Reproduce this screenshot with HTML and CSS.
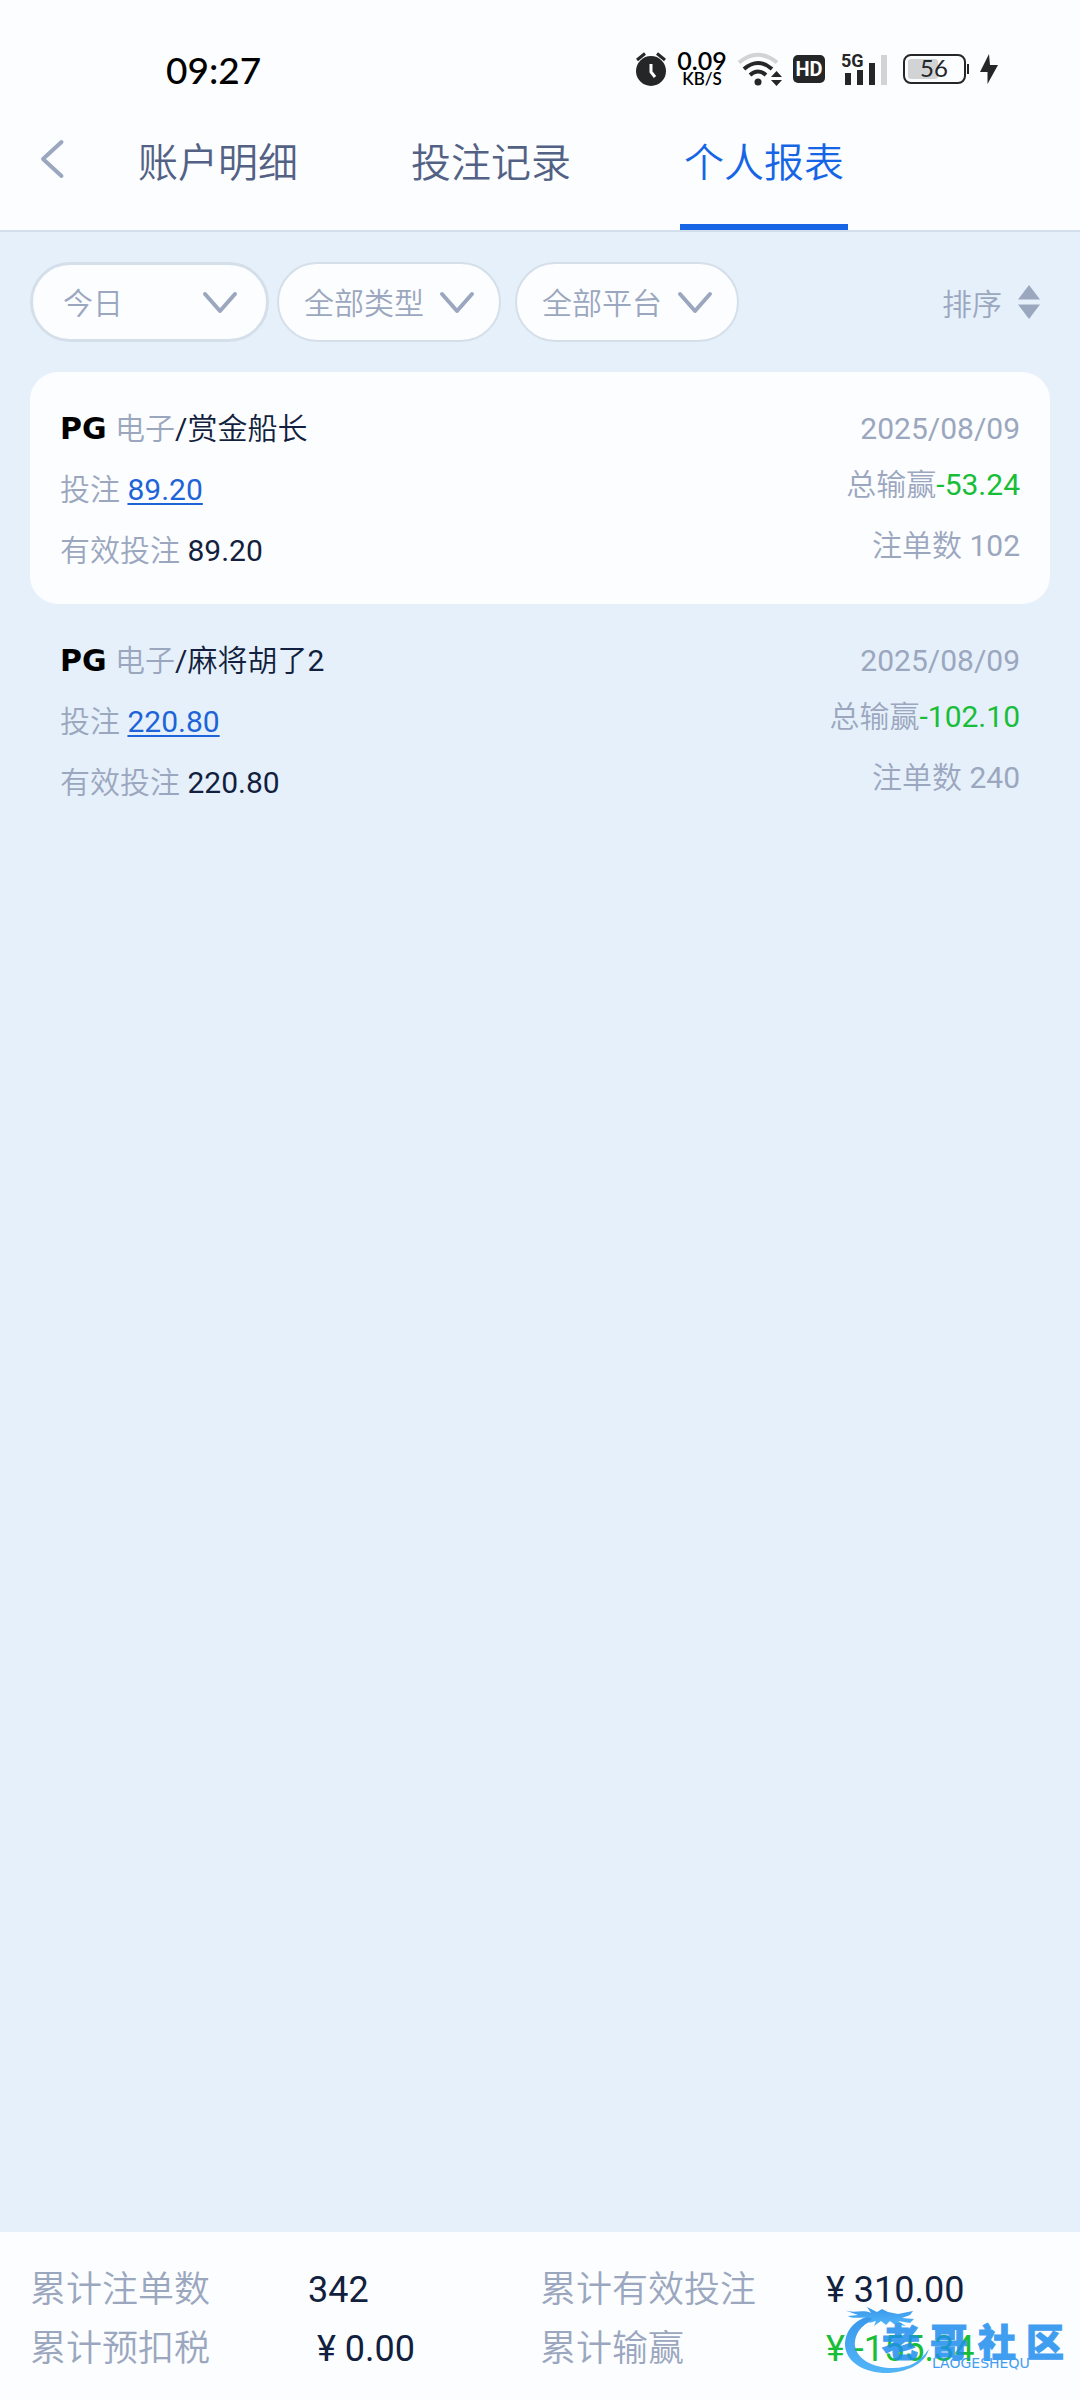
FILE: index.html
```html
<!DOCTYPE html>
<html lang="zh-CN">
<head>
    <meta charset="UTF-8">
    <meta name="viewport" content="width=device-width, initial-scale=1.0">
    <title>个人报表</title>
    <link rel="stylesheet" href="styles.css">
</head>
<body>
    <header class="header">
        <div class="status-bar">
            <span class="time">09:27</span>
            <div class="status-icons">
                <svg width="30" height="34" viewBox="0 0 30 34">
                    <circle cx="15" cy="19" r="15" fill="#252628"/>
                    <path d="M1 8L9 1.500M29 8L21 1.500" stroke="#252628" stroke-width="3" fill="none"/>
                    <path d="M15 12v8l4 5" stroke="#fff" stroke-width="3" fill="none"/>
                </svg>
                <div class="speed">
                    <span class="speed-value">0.09</span>
                    <span class="speed-unit">KB/S</span>
                </div>
                <svg width="44" height="34" viewBox="0 0 44 34">
                    <g fill="none" stroke-width="4">
                        <path d="M1 10.500Q20 -5 39 10.500" stroke="#d2d3d5"/>
                        <path d="M6 17Q20 5 34 17" stroke="#252628"/>
                        <path d="M12 23Q20 16 28 23" stroke="#252628"/>
                    </g>
                    <circle cx="20" cy="30" r="3.500" fill="#252628"/>
                    <path d="M33 25h11l-5.500-6zM33 28h11l-5.500 6z" fill="#252628"/>
                </svg>
                <svg width="32" height="28" viewBox="0 0 32 28">
                    <rect width="32" height="28" rx="5" fill="#252628"/>
                    <text class="hd-text" x="16" y="21" text-anchor="middle">HD</text>
                </svg>
                <svg class="signal" width="46" height="34" viewBox="0 0 46 34">
                    <text class="net-text" x="0" y="15">5G</text>
                    <path d="M4 21h6v12H4zM16 18h6v15h-6zM28 11h6v22h-6z" fill="#252628"/>
                    <path d="M40 3h6v30h-6z" fill="#d2d3d5"/>
                </svg>
                <svg width="66" height="30" viewBox="0 0 66 30">
                    <rect x="5" y="5" width="30" height="20" rx="3" fill="#d2d3d5"/>
                    <rect x="1" y="1" width="61" height="28" rx="7" fill="none" stroke="#252628" stroke-width="2"/>
                    <path d="M64 10h2v10h-2z" fill="#252628"/>
                    <text class="battery-text" x="31" y="23" text-anchor="middle">56</text>
                </svg>
                <svg width="18" height="30" viewBox="0 0 18 30">
                    <path d="M9 0L0 18H7.500V30L18 11H10z" fill="#252628"/>
                </svg>
            </div>
        </div>
        <nav class="nav">
            <button class="back-btn" aria-label="返回">
                <svg width="22" height="38" viewBox="0 0 22 38">
                    <path d="M20.500 2L2 19L20.500 36" fill="none" stroke="#9ba7be" stroke-width="4" stroke-linecap="round" stroke-linejoin="round"/>
                </svg>
            </button>
            <div class="tabs">
                <a href="#detail" class="tab">账户明细</a>
                <a href="#bets" class="tab">投注记录</a>
                <a href="#report" class="tab active">个人报表</a>
            </div>
        </nav>
    </header>

    <main class="main">
        <div class="filters">
            <div class="filter filter-date">
                <select aria-label="日期">
                    <option>今日</option>
                    <option>昨日</option>
                </select>
                <svg class="arrow" width="34" height="22" viewBox="0 0 34 22"><path d="M2 2L17 19L32 2"/></svg>
            </div>
            <div class="filter filter-type">
                <select aria-label="类型">
                    <option>全部类型</option>
                    <option>电子</option>
                </select>
                <svg class="arrow" width="34" height="22" viewBox="0 0 34 22"><path d="M2 2L17 19L32 2"/></svg>
            </div>
            <div class="filter">
                <select aria-label="平台">
                    <option>全部平台</option>
                    <option>PG</option>
                </select>
                <svg class="arrow" width="34" height="22" viewBox="0 0 34 22"><path d="M2 2L17 19L32 2"/></svg>
            </div>
            <button class="sort-btn">
                排序
                <svg width="22" height="34" viewBox="0 0 22 34">
                    <path d="M0 14.500h22L11 0zM0 19.500h22L11 34z" fill="#9ba7be"/>
                </svg>
            </button>
        </div>

        <div class="records">
            <div class="record card">
                <div class="record-left">
                    <p class="game"><span class="pg">PG</span><span>电子<b>/赏金船长</b></span></p>
                    <p>投注 <a href="#bets">89.20</a></p>
                    <p>有效投注 <b>89.20</b></p>
                </div>
                <div class="record-right">
                    <p class="date">2025/08/09</p>
                    <p>总输赢<span class="lose">-53.24</span></p>
                    <p>注单数 102</p>
                </div>
            </div>
            <div class="record">
                <div class="record-left">
                    <p class="game"><span class="pg">PG</span><span>电子<b>/麻将胡了2</b></span></p>
                    <p>投注 <a href="#bets">220.80</a></p>
                    <p>有效投注 <b>220.80</b></p>
                </div>
                <div class="record-right">
                    <p class="date">2025/08/09</p>
                    <p>总输赢<span class="lose">-102.10</span></p>
                    <p>注单数 240</p>
                </div>
            </div>
        </div>
    </main>

    <footer class="summary">
        <dl class="totals">
            <dt>累计注单数</dt>
            <dd>342</dd>
            <dt>累计有效投注</dt>
            <dd>¥ 310.00</dd>
            <dt>累计预扣税</dt>
            <dd>&nbsp;¥ 0.00</dd>
            <dt>累计输赢</dt>
            <dd class="lose">¥ -155.34</dd>
        </dl>
        <div class="watermark">
            <svg width="90" height="74" viewBox="0 0 90 74">
                <defs>
                    <linearGradient id="wave" x1="0" y1="0" x2="0" y2="1">
                        <stop offset="0" stop-color="#1785e8"/>
                        <stop offset="1" stop-color="#35aaf7"/>
                    </linearGradient>
                </defs>
                <g fill="url(#wave)">
                    <path d="M28 9C9 14 1 26 1 39C2 57 22 68 46 67C66 65 81 57 85 43C76 56 65 62 49 62C30 62 13 54 11 40C10 28 18 17 33 13z"/>
                    <path d="M0 4C10 8 18 3 27 7L23 1L33 6L38 3L44 6L54 8L69 5L66 9L58 12L70 13L66 17L54 15L62 20L50 18L46 15L42 19L37 15L30 20L32 15L25 17L28 12C18 10 10 14 4 10L14 9z"/>
                </g>
            </svg>
            <div class="watermark-text">
                <div class="watermark-name"><span>老</span><span>哥</span><span>社</span><span>区</span></div>
                <div class="watermark-en">LAOGESHEQU</div>
            </div>
        </div>
    </footer>
</body>
</html>
```
FILE: styles.css
```css
* {
    box-sizing: border-box;
}
body {
    margin: 0;
    min-height: 100vh;
    display: flex;
    flex-direction: column;
    font-family: Roboto, "Noto Sans CJK SC DemiLight", "Noto Sans CJK SC", sans-serif;
    font-size: 30px;
    font-weight: 400;
    color: #9ba7be;
    background: #e6f0fb;
}
p, dl, dd {
    margin: 0;
}
b {
    font-weight: 400;
    color: #121f3e;
}
button, select {
    font: inherit;
    color: inherit;
    background: none;
    border: none;
    padding: 0;
    cursor: pointer;
}
svg {
    display: block;
    flex-shrink: 0;
    overflow: visible;
}

/* header */
.header {
    background: #fcfdff;
    border-bottom: 2px solid #d2deeb;
}
.status-bar {
    display: flex;
    justify-content: space-between;
    align-items: center;
    height: 92px;
    padding: 46px 82px 0 166px;
    color: #000;
    font-family: Lato, sans-serif;
}
.time {
    font-size: 37px;
    font-weight: 500;
}
.status-icons {
    display: flex;
    align-items: center;
    gap: 11px;
}
.speed {
    display: flex;
    flex-direction: column;
    align-items: center;
    width: 50px;
    font-weight: 600;
}
.speed-value {
    font-size: 25px;
    line-height: 19px;
}
.speed-unit {
    font-size: 17px;
    line-height: 18px;
}
.signal {
    margin: 0 5px;
}
.hd-text {
    font: 700 20px Roboto, sans-serif;
    fill: #fff;
}
.net-text {
    font: 700 18px Roboto, sans-serif;
    fill: #252628;
}
.battery-text {
    font: 400 24px Lato, sans-serif;
    fill: #252628;
}
.nav {
    display: flex;
    align-items: center;
    height: 138px;
    padding-left: 41px;
}
.back-btn {
    padding-bottom: 4px;
    margin-right: 71px;
}
.tabs {
    display: flex;
    gap: 105px;
    height: 100%;
}
.tab {
    padding: 0 4px;
    font-size: 40px;
    line-height: 143px;
    color: #536184;
    text-decoration: none;
}
.tab.active {
    color: #1565e5;
    box-shadow: inset 0 -6px #1565e5;
}

/* filters */
.main {
    flex: 1;
    padding: 30px 30px 0;
}
.filters {
    display: flex;
    align-items: center;
}
.filter {
    position: relative;
    width: 224px;
}
.filter select {
    display: block;
    width: 100%;
    height: 80px;
    padding: 2px 25px 0;
    border: 2px solid #d5dfea;
    border-radius: 40px;
    background: #fcfdff;
    appearance: none;
}
.filter-date {
    width: 239px;
    margin-right: 8px;
}
.filter-date select {
    padding: 2px 30px 0;
    border-width: 3px;
}
.filter-type {
    margin-right: 14px;
}
.arrow {
    position: absolute;
    right: 27px;
    top: 30px;
    fill: none;
    stroke: #9ba7be;
    stroke-width: 4;
    stroke-linecap: round;
    stroke-linejoin: round;
    pointer-events: none;
}
.filter-date .arrow {
    right: 32px;
}
.sort-btn {
    display: flex;
    align-items: center;
    gap: 16px;
    margin-left: auto;
    margin-right: 10px;
}

/* records */
.records {
    margin-top: 30px;
}
.record {
    display: flex;
    justify-content: space-between;
    padding: 26px 30px 23px;
    line-height: 61px;
}
.record.card {
    background: #fcfdff;
    border-radius: 28px;
}
.record a {
    color: #1d64d8;
    text-decoration-thickness: 2px;
    text-underline-offset: 3px;
}
.record-right {
    padding-top: 5px;
    text-align: right;
}
.date {
    line-height: 51px;
}
.game {
    display: flex;
    gap: 6px;
}
.pg {
    width: 49px;
    font-family: "DejaVu Sans", sans-serif;
    font-size: 30px;
    font-weight: 700;
    color: #000;
}
.lose {
    color: #18be38;
}

/* bottom summary */
.summary {
    position: relative;
    padding: 29px 30px 21px;
    background: #fcfdff;
}
.totals {
    display: grid;
    grid-template-columns: 278fr 232fr 286fr 224fr;
    font-size: 36px;
    line-height: 59px;
}
.totals dd {
    color: #121f3e;
}
.totals dd.lose {
    color: #18be38;
}
.watermark {
    position: absolute;
    right: 16px;
    bottom: 20px;
    display: flex;
    opacity: 0.85;
    color: #1f8eee;
    pointer-events: none;
}
.watermark-text {
    width: 182px;
    margin-left: -52px;
    padding-top: 17px;
}
.watermark-name {
    display: flex;
    justify-content: space-between;
    font-family: "Noto Sans CJK SC", sans-serif;
    font-size: 38px;
    font-weight: 900;
    line-height: 34px;
    -webkit-text-stroke: 1px #1f8eee;
}
.watermark-en {
    padding-left: 50px;
    font: 14px/12px "DejaVu Sans", sans-serif;
}
```
